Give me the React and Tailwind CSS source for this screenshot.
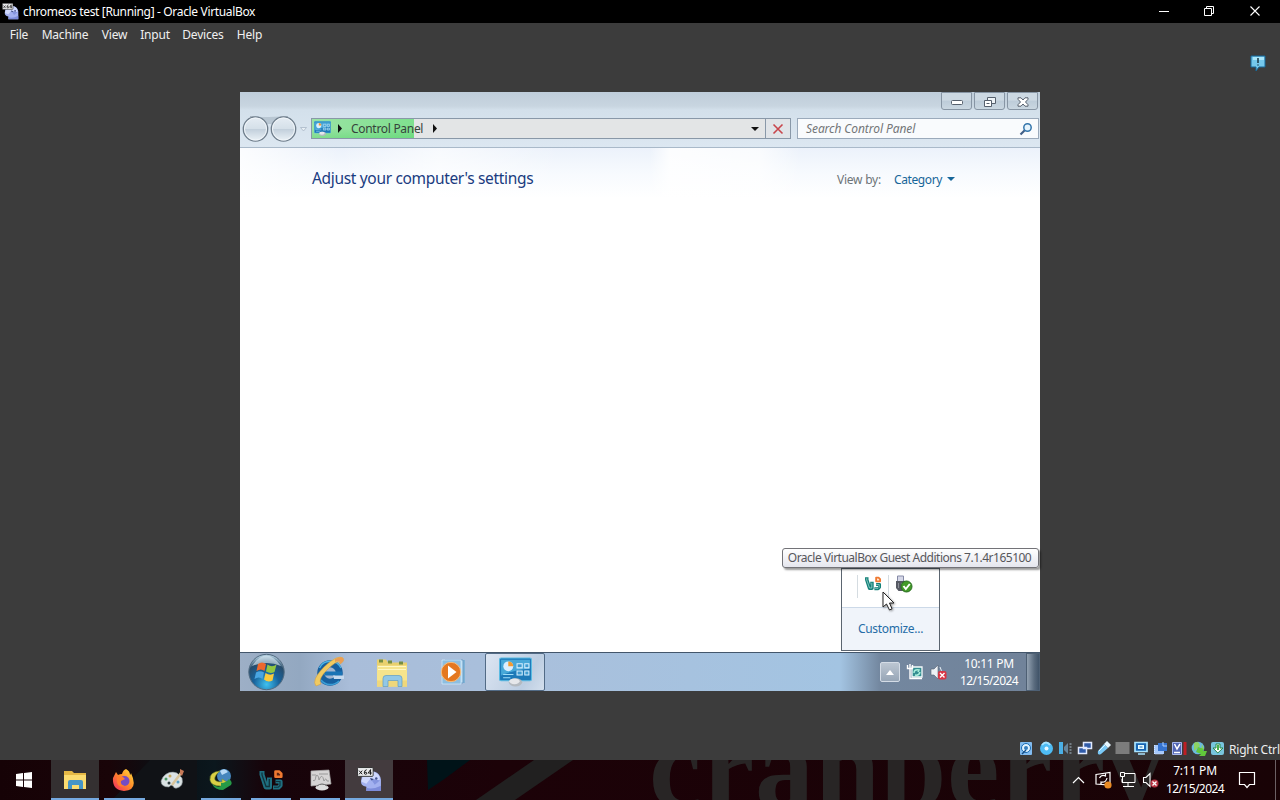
import React from "react";

const MENU = [
  ["File", "w-[32px]"],
  ["Machine", "w-[60px]"],
  ["View", "w-[39px]"],
  ["Input", "w-[42px]"],
  ["Devices", "w-[54px]"],
  ["Help", "w-[39px]"],
];

function Svg({ w, h, box, className = "", children }) {
  return (
    <svg width={w} height={h} viewBox={box || `0 0 ${w} ${h}`} className={`block shrink-0 ${className}`} fill="none">
      {children}
    </svg>
  );
}

function VmIcon({ size }) {
  return (
    <Svg w={size} h={size} box="0 0 24 24">
      <path d="M5 7Q9 2 17 4.5Q22 6 23 12V23H9V19Q3 18 4 13Z" fill="#a3b1f0" />
      <path d="M6 8Q11 3 17 5Q22 7 22 12L18 14L13 11L9 16L4 14Z" fill="#cfd8fd" />
      <path d="M13 11L22 13L17 17Z" fill="#8595df" />
      <path d="M12.5 10.5L16 11.5L14 13Z" fill="#33406f" />
      <circle cx="18.5" cy="11" r="1.2" fill="#45548f" />
      <path d="M9 20Q15 22 23 18V23H9Z" fill="#7d8cda" />
      <rect x=".5" y=".5" width="15" height="8.5" rx="1" fill="#e8e8ea" stroke="#222" strokeWidth=".8" />
      <path d="M2 3.5l3 3.5M5 3.5l-3 3.5M9.3 2.6Q7 3 7 5.6 7 7 8.2 7 9.6 7 9.5 5.7 9.2 4.6 7.2 5.2M13 7.5v-5L10.8 5.8h3.4" stroke="#111" strokeWidth=".9" />
    </Svg>
  );
}

function VBoxLogo({ w, h, teal = "#1f6f80", fill = "#12333c", hole = "#5c2310" }) {
  return (
    <Svg w={w} h={h} box="0 0 26 23">
      <path d="M4 2.5V6L8 18.5H11.5V9" stroke={teal} strokeWidth="5" strokeLinejoin="round" />
      <path d="M4 4V6.5L8 18H11.3V10.5" stroke={fill} strokeWidth="1.3" />
      <path d="M17.5 3H21L23.3 5.2V8.3H17.5Z" fill={hole} stroke="#ef7931" strokeWidth="2.6" strokeLinejoin="round" />
      <path d="M17.5 13H22.5V17L20.5 19H15" stroke={teal} strokeWidth="4.2" strokeLinejoin="round" />
      <path d="M17.5 13H22V17L20.2 18.8H16" stroke={fill} strokeWidth="1.1" />
    </Svg>
  );
}

function ControlPanelIcon({ w, h }) {
  return (
    <Svg w={w} h={h} box="0 0 32 29">
      <rect x=".5" y="1" width="31" height="22" rx="1.5" fill="#1d79b8" stroke="#5bbbe2" />
      <path d="M2 2.5H30V11Q15 12 2 18Z" fill="#48a8d8" />
      <circle cx="9" cy="9" r="4.8" fill="#dcefff" />
      <path d="M9 9V4.2A4.8 4.8 0 0 1 13.8 9Z" fill="#f39b31" />
      <path d="M17.5 6.5h5v4h-5zM25 6.5h4v4h-4zM17.5 13.5h5v4h-5zM25 13.5h4v4h-4z" fill="#3f9bd0" stroke="#d8f1ff" />
      <path d="M4 17h10M4 20h7" stroke="#9fdcf7" />
      <ellipse cx="16" cy="24.5" rx="6.5" ry="4" fill="#b4bac0" />
      <ellipse cx="15" cy="23.5" rx="5" ry="2.8" fill="#e5e7ea" />
    </Svg>
  );
}

function GuestFolder() {
  return (
    <Svg w={32} h={31} box="0 0 32 30">
      <path d="M1 2H10L12 5H31V29H1Z" fill="#e9d06e" />
      <path d="M1 8H31V29H1Z" fill="#f6e48c" />
      <path d="M3 2h4v3H3zM12 3h4v3h-4zM23 4h4v3h-4z" fill="#768e42" />
      <path d="M2 9H30M2 12H30" stroke="#fff8c4" />
      <path d="M1 23H31V29H1Z" fill="#ecd274" opacity=".7" />
      <path d="M7 29V21Q7 18 10 18H23Q26 18 26 21V29H22V23H12V29Z" fill="#92c8e6" stroke="#5e9cc6" strokeWidth=".7" />
    </Svg>
  );
}

function TitleBar() {
  return (
    <header className="flex h-[23px] shrink-0 items-center bg-black text-white">
      <div className="flex w-[23px] justify-start pl-[2px]"><VmIcon size={17} /></div>
      <span className="flex-1 pt-[1px] text-[12px] tracking-[-0.34px]">chromeos test [Running] - Oracle VirtualBox</span>
      <Svg w={137} h={22}>
        <path d="M16 10.5H26" stroke="#fff" />
        <path d="M61.5 7.5h7v7h-7zM63.5 7V5.5h7v7H69" stroke="#fff" />
        <path d="M107.5 5.5l9 9M116.5 5.5l-9 9" stroke="#fff" strokeWidth="1.1" />
      </Svg>
    </header>
  );
}

const WINDOW_BUTTON = "flex h-[18px] w-[31px] items-center justify-center rounded-b-[3px] border border-[#8795a4] bg-[linear-gradient(#ccd8e2_45%,#bdccd9_50%,#cad7e1)] pt-[1px]";

function WindowButtons() {
  return (
    <div className="flex h-[18px] shrink-0 justify-end gap-[2px] pr-[2px]">
      <div className={WINDOW_BUTTON}>
        <Svg w={12} h={8}><rect x=".5" y="2.5" width="11" height="4" rx="1" fill="#fff" stroke="#56606d" /></Svg>
      </div>
      <div className={WINDOW_BUTTON}>
        <Svg w={13} h={12}>
          <path d="M4.5 1.5h8v6h-8z" fill="#eef3f7" stroke="#56606d" />
          <path d="M1.5 4.5h7v6h-7z" fill="#fff" stroke="#56606d" /><path d="M3.5 7.5h3" stroke="#56606d" />
        </Svg>
      </div>
      <div className={WINDOW_BUTTON}>
        <Svg w={12} h={10}>
          <path d="M1 .8h3L6 3 8 .8h3v1.5L8.5 5 11 7.7v1.5H8L6 7 4 9.2H1V7.7L3.5 5 1 2.3Z" fill="#fff" stroke="#56606d" />
        </Svg>
      </div>
    </div>
  );
}

function ExplorerBar() {
  return (
    <div className="flex h-[56px] shrink-0 flex-col border-b border-[#a9b9c9] bg-[linear-gradient(#bfcdda_0px,#c8d5e0_14px,#d3e0eb_18px,#dce7f1_55px)]">
      <WindowButtons />
      <div className="flex h-[38px] items-center">
        <Svg w={71} h={30}>
          <defs>
            <linearGradient id="orb" x1="0" y1="0" x2="0" y2="1">
              <stop stopColor="#e6edf4" /><stop offset=".48" stopColor="#d5e0e9" /><stop offset=".52" stopColor="#c3d0dc" /><stop offset="1" stopColor="#ecf3f8" />
            </linearGradient>
          </defs>
          <path d="M10 2.7Q29 5 48 2.7" stroke="#a6b2be" strokeWidth="1.5" />
          <path d="M15 3H43L32 10H27Z" fill="#b9c7d3" />
          <circle cx="15.5" cy="15" r="12.2" fill="url(#orb)" stroke="#6e7d8b" strokeWidth="1.3" />
          <circle cx="43.5" cy="15" r="12.2" fill="url(#orb)" stroke="#6e7d8b" strokeWidth="1.3" />
          <circle cx="15.5" cy="15" r="11" stroke="#f0f5f9" /><circle cx="43.5" cy="15" r="11" stroke="#f0f5f9" />
          <path d="M60.5 13.5h6l-3 3.5z" fill="#e9f0f6" stroke="#a9b8c6" strokeWidth=".8" />
        </Svg>
        <div className="flex h-[21px] w-[455px] items-center border border-[#8998a8] bg-[#e3e5e6] bg-[linear-gradient(transparent_50%,rgba(60,205,85,0.28)_100%),linear-gradient(90deg,#9be3a4_0,#7fe08f_102px)] bg-[size:102px_100%] bg-no-repeat">
          <div className="pl-[2px]"><ControlPanelIcon w={17} h={17} /></div>
          <Svg w={20} h={11}><path d="M7 1l4 4.5L7 10z" fill="#111" /></Svg>
          <span className="w-[72px] pt-[1px] text-[12px] tracking-[-0.3px] whitespace-nowrap text-[#36443b]">Control Panel</span>
          <Svg w={20} h={11}><path d="M10 1l4 4.5L10 10z" fill="#111" /></Svg>
          <Svg w={9} h={6} className="mr-[5px] ml-auto"><path d="M0 1h8L4 5z" fill="#111" /></Svg>
        </div>
        <div className="flex h-[21px] w-[25px] items-center justify-center border border-l-0 border-[#8998a8] bg-[#e0e4e8] pt-[1px]">
          <Svg w={12} h={12}><path d="M1.5 1.5l9 9M10.5 1.5l-9 9" stroke="#c8464c" strokeWidth="1.6" /></Svg>
        </div>
        <div className="ml-[6px] flex h-[21px] w-[242px] items-center border border-[#9baabb] bg-[#f9fbfd] pl-[8px]">
          <span className="pt-[1px] text-[12px] tracking-[-0.08px] text-[#737678] italic">Search Control Panel</span>
          <Svg w={14} h={14} className="mr-[5px] ml-auto">
            <path d="M1.5 12.5L6 8" stroke="#405f87" strokeWidth="2.2" />
            <circle cx="8.5" cy="5.5" r="3.7" fill="#e6f4fd" stroke="#3475ab" strokeWidth="1.5" />
          </Svg>
        </div>
      </div>
    </div>
  );
}

function GuestTaskbar() {
  return (
    <div className="flex h-[39px] shrink-0 border-t border-[#43566b] bg-[linear-gradient(90deg,#9dafc6_0,#93a8c1_60px,#a9bdd9_110px,#a9c0dc_300px,#a3c4e2_600px,#73879f_640px,#71839a_785px)]">
      <div className="flex w-[58px] justify-center pr-[4px]">
        <Svg w={40} h={38}>
          <defs>
            <radialGradient id="start" cx=".5" cy=".85" r=".8">
              <stop stopColor="#3fc1ef" /><stop offset=".45" stopColor="#18639c" /><stop offset=".8" stopColor="#284c6b" /><stop offset="1" stopColor="#a5c2d4" />
            </radialGradient>
          </defs>
          <circle cx="19.5" cy="19" r="17.7" fill="url(#start)" stroke="#526b81" />
          <path d="M5 13Q19 -8 34 13Q20 7 5 13" fill="#d9e9f2" opacity=".65" />
          <path d="M11 11Q15 8 19 11L17.5 18Q14 15 9.5 18Z" fill="#ec682d" />
          <path d="M20.5 11.5Q25 15 29.5 11.5L27.5 19Q23.5 21 19 18.5Z" fill="#92c742" />
          <path d="M9 19.5Q13 17 17 19.5L15.5 26Q12 23 7.5 26Z" fill="#49a5e2" />
          <path d="M18.5 20Q23 23 27 20.5L25.5 27.5Q21 30 17 26.5Z" fill="#fbcb3b" />
        </Svg>
      </div>
      <div className="flex w-[62px] items-center justify-center">
        <Svg w={32} h={32}>
          <circle cx="17" cy="17" r="9.3" stroke="#17609f" strokeWidth="7" />
          <path d="M6.5 12A12 12 0 0 1 28 12" stroke="#4cb4e4" strokeWidth="1.5" />
          <path d="M8 24A12 12 0 0 0 26 25" stroke="#3a9ed6" strokeWidth="1.5" />
          <path d="M10 15.5H29V19.5H12Z" fill="#1973b5" /><path d="M20 19.5h11v3.5H21z" fill="#c5d9ee" />
          <path d="M3 30Q-2 24 11 11Q25 -2 30 2Q32 5 27 8Q28 2 17 11Q4 23 8 28Z" fill="#f0ca62" stroke="#d29a3b" strokeWidth=".5" />
          <path d="M22 3Q28 0 30 2Q32 5 27 8Q28 3 22 6Z" fill="#eb9d52" />
        </Svg>
      </div>
      <div className="flex w-[62px] items-center justify-center pl-[2px]"><GuestFolder /></div>
      <div className="flex w-[62px] items-center justify-center">
        <Svg w={28} h={28}>
          <path d="M8 2h18v23H8z" fill="#7fb3d6" /><path d="M6 2h18v23H6z" fill="#b7d9ee" stroke="#5b91bd" strokeWidth=".7" />
          <path d="M3 2h19v24H3z" fill="#8dbee0" stroke="#d8efff" strokeWidth=".7" />
          <circle cx="12" cy="14" r="9.7" fill="#e47820" stroke="#f7bd7b" />
          <path d="M9 7.5l8.5 6.5L9 20.5z" fill="#fff" />
        </Svg>
      </div>
      <div className="ml-[1px] flex w-[60px] items-center justify-center rounded-[2px] border border-[#526b86] bg-[linear-gradient(120deg,#dce5f2,#bccde1_70%,#d3dfed)]">
        <ControlPanelIcon w={33} h={30} />
      </div>
      <div className="ml-auto flex items-center">
        <div className="mr-[6px] flex h-[20px] w-[20px] items-center justify-center rounded-[2px] border border-[#d4dce6] bg-[linear-gradient(#bcc6d2,#97a6b7)]">
          <Svg w={8} h={5}><path d="M0 5L4 0l4 5z" fill="#fff" /></Svg>
        </div>
        <Svg w={18} h={18}>
          <path d="M6 4h10v10H6z" fill="#348d91" stroke="#f4fbfc" strokeWidth="1.3" />
          <path d="M1.5 2v3.5h5V2M4 1v14.5h12" stroke="#fff" strokeWidth="1.4" />
          <path d="M8 10Q8 6 13 7l-1 2M14 9q-1 4-5 3" stroke="#a9efdc" strokeWidth="1.5" />
        </Svg>
        <Svg w={18} h={18} className="ml-[6px]">
          <path d="M1 6h3l4-4v14l-4-4H1z" fill="#edf1f5" stroke="#546273" strokeWidth=".6" />
          <path d="M10 4q3 4 0 7" stroke="#e8eef4" />
          <rect x="8" y="8" width="8.5" height="8.5" rx="2" fill="#d73645" /><path d="M10 10l4.5 4.5M14.5 10L10 14.5" stroke="#fff" strokeWidth="1.4" />
        </Svg>
        <div className="ml-[7px] w-[68px] pb-[1px] text-center text-[12px] leading-[17px] tracking-[-0.3px] text-white">
          <div>10:11 PM</div><div className="tracking-[-0.6px]">12/15/2024</div>
        </div>
        <div className="ml-[3px] h-[38px] w-[14px] border border-[#4e6074] bg-[linear-gradient(90deg,#93a2b2,#5a6b7e_60%,#405368)]" />
      </div>
    </div>
  );
}

function TrayPopup() {
  return (
    <div className="absolute top-[476px] left-[601px] flex h-[83px] w-[99px] flex-col border border-[#5b6570] bg-white">
      <div className="flex h-[38px] items-start pt-[6px]">
        <div className="ml-[15px] flex h-[23px] w-[32px] justify-center border-r border-l border-[#d5dce1]">
          <VBoxLogo w={18} h={17} teal="#138078" fill="#8fccc6" hole="#ffe8d4" />
        </div>
        <Svg w={20} h={20} className="ml-[5px]">
          <path d="M3.5 1h6v6h-6z" fill="#d6d8e8" stroke="#858aa6" /><path d="M2 6h9v7l-2.5 3h-4L2 13z" fill="#565963" />
          <path d="M4.5 8v5M7.5 8v5" stroke="#8c9098" />
          <circle cx="12.5" cy="11.5" r="5.5" fill="#439a28" stroke="#276c20" /><path d="M9.5 11l2.3 3 4-5" stroke="#fff" strokeWidth="2" />
        </Svg>
      </div>
      <div className="flex flex-1 items-center justify-center border-t border-[#ccd9e8] bg-[#f0f4fa] pb-[1px] text-[12px] tracking-[-0.3px] text-[#256ca6]">Customize...</div>
    </div>
  );
}

function GuestScreen() {
  return (
    <main className="relative mx-auto mt-[47px] flex h-[599px] w-[800px] flex-col bg-white">
      <ExplorerBar />
      <section className="flex-1 bg-[linear-gradient(90deg,rgba(255,255,255,0.8)_0,transparent_100px,rgba(255,255,255,0.6)_200px,transparent_320px,transparent_410px,rgba(255,255,255,0.85)_430px,rgba(255,255,255,0.7)_520px,transparent_560px),linear-gradient(#ecf2fb_0px,#f7fafe_25px,#ffffff_50px)]">
        <div className="flex h-[62px] items-center pl-[72px]">
          <h1 className="w-[525px] pb-[1px] text-[15.5px] tracking-[-0.33px] text-[#193b80]">Adjust your computer's settings</h1>
          <span className="w-[57px] pt-[2px] text-[12px] tracking-[-0.25px] text-[#6d7478]">View by:</span>
          <span className="w-[53px] pt-[2px] text-[12px] tracking-[-0.4px] text-[#176699]">Category</span>
          <Svg w={9} h={6}><path d="M0 1h8L4 5z" fill="#176699" /></Svg>
        </div>
      </section>
      <GuestTaskbar />
      <TrayPopup />
      <div className="absolute top-[456px] left-[542px] flex h-[20px] w-[257px] items-center justify-center rounded-[3px] border border-[#737378] bg-[linear-gradient(#ffffff,#e5e6ee)] pr-[2px] text-[12px] tracking-[-0.5px] whitespace-nowrap text-[#57575b] shadow-[2px_2px_2px_rgba(0,0,0,0.4)]">
        Oracle VirtualBox Guest Additions 7.1.4r165100
      </div>
      <div className="absolute top-[499px] left-[642px]">
        <Svg w={14} h={22} className="drop-shadow-[1px_1px_1px_rgba(0,0,0,0.4)]"><path d="M1 1v15l3.5-3L7.5 19l2.5-1.2L7.5 12H12z" fill="#fff" stroke="#222" /></Svg>
      </div>
    </main>
  );
}

function StatusBar() {
  return (
    <div className="flex h-[23px] shrink-0 items-center justify-end pt-[1px]">
      <Svg w={208} h={18}>
        <rect x="0" y="2" width="12" height="13" rx="1" fill="#82bcf0" />
        <circle cx="6" cy="8" r="4.5" fill="#e1f3ff" stroke="#176bb3" /><circle cx="6" cy="8" r="2" fill="#347fbf" /><path d="M2 14l4-4" stroke="#144e87" strokeWidth="1.5" />
        <circle cx="26.5" cy="8.5" r="6.5" fill="#4ebcf4" /><path d="M22 5q4-5 8 0" stroke="#a7e4ff" strokeWidth="2" /><circle cx="26.5" cy="8.5" r="2" fill="#e8f8ff" />
        <path d="M39 2h4v12h-4z" fill="#4aafe5" /><path d="M44 7l4-4v11l-4-4z" fill="#66849a" /><path d="M50.5 3v11" stroke="#737d84" strokeWidth="2" strokeDasharray="2 1" />
        <path d="M63.5 2.5h8v6h-8zM58.5 7.5h8v6h-8z" fill="#315ca9" stroke="#e1eafe" strokeWidth="1.5" />
        <path d="M78 11l6-7 4 4-7 6q-4 2-3-3z" fill="#7ac9f7" /><path d="M84 4l3-3 4 4-3 3z" fill="#e5f6ff" /><path d="M79 11l6-6" stroke="#dff8ff" />
        <rect x="95.5" y="2" width="14" height="12" fill="#7c7c7c" />
        <path d="M115 2.5h12v9h-12zM118 14h7" fill="#1766b3" stroke="#a9e4ff" strokeWidth="1.7" /><rect x="118" y="5" width="6" height="4" fill="#e4fbff" /><path d="M119.5 6.5h3v1h-3z" fill="#1766b3" />
        <path d="M134 5h4v6h6v3h-10z" fill="#a6c8fa" /><path d="M138 3h9v8h-9z" fill="#3573cf" /><path d="M143 2v4h4" stroke="#abcfff" /><path d="M134.5 5v9h9" stroke="#d5e7ff" strokeDasharray="1 1" />
        <path d="M152.5 2.5h9v12h-9z" fill="#5265b4" stroke="#a7b7ec" /><path d="M154.5 4l2.5 5 3-5M154 12.5h6" stroke="#fff" strokeWidth="1.5" />
        <path d="M165 2v13" stroke="#be1e24" strokeWidth="3" />
        <circle cx="178" cy="8" r="6.3" fill="#6ab9df" /><path d="M174 3q5-3 6 3l-6 5zM182 4l2 5-3 2z" fill="#8cd264" /><path d="M178 7l6 2-1 2 4 0-2 5-6 0 2-2-5-2z" fill="#62c83b" />
        <rect x="191" y="2" width="13" height="13" rx="2" fill="#78c5de" /><path d="M196 4h4v4h3l-5.2 5L193 8h3z" fill="#fff" stroke="#298a4c" /><path d="M198 5v5" stroke="#4ab24c" strokeWidth="2" />
      </Svg>
      <span className="w-[52px] pt-[1px] pl-[1px] text-[12px] tracking-[-0.2px] whitespace-nowrap text-[#eee]">Right Ctrl</span>
    </div>
  );
}

function TaskItem({ className, line, children }) {
  return (
    <div className={`flex flex-col items-center justify-end ${className}`}>
      <div className="flex flex-1 items-center justify-center pt-[1px]">{children}</div>
      <div className={`h-[2px] ${line}`} />
    </div>
  );
}

function HostTaskbar() {
  return (
    <footer className="relative flex h-[40px] shrink-0 overflow-hidden bg-[linear-gradient(90deg,#160206_0,#190408_110px,#0a1015_165px,#0b171d_215px,#17040a_265px,#1c0208_500px,#190306_1280px)]">
      <svg className="absolute top-0 left-0" width="1280" height="40" aria-hidden="true">
        <path d="M427 0H470L443 20L428 30Z" fill="#001318" />
        <path d="M534 0H573L515 40H476Z" fill="#212020" />
        <path d="M150 0H197V40H112Z" fill="#101216" />
      </svg>
      <div className="absolute top-[-51px] left-[649px] font-['Liberation_Serif',serif] text-[118px] leading-[118px] font-bold tracking-[0.6px] text-[#282525]">cranberry</div>
      <nav className="relative flex">
        <TaskItem className="w-[51px]" line="w-0">
          <Svg w={18} h={18} className="mr-[3px]"><path d="M1 3l7-1v6.5H1zM9 2l8-1v7.5H9zM1 9.5h7V16l-7-1zM9 9.5h8V17l-8-1z" fill="#fff" /></Svg>
        </TaskItem>
        <TaskItem className="w-[48px] bg-[#343031]" line="w-[48px] bg-[#75a9df]">
          <Svg w={24} h={20}>
            <path d="M1 1h8l2 2h12v16H1z" fill="#e5b845" /><path d="M1 5h22v14H1z" fill="#fbdc70" />
            <path d="M5 19v-7q0-2 2-2h11q2 0 2 2v7h-4v-4H9v4z" fill="#4695c6" />
          </Svg>
        </TaskItem>
        <TaskItem className="w-[50px]" line="w-[41px] bg-[#75a9df]">
          <Svg w={24} h={24}>
            <defs><linearGradient id="fox" x1="1" y1="0" x2="0" y2="1"><stop stopColor="#ffe43e" /><stop offset=".5" stopColor="#ff8529" /><stop offset="1" stopColor="#ef2469" /></linearGradient></defs>
            <path d="M14 1q4 2 4 6 1-1 1-2 8 17-7 18Q0 22 1 10L4 4l2 3q2-1 4-1 1-4 4-5z" fill="url(#fox)" />
            <circle cx="12.5" cy="13" r="5" fill="#754cc4" /><path d="M5 8l6 1 2 2-4 2q-1 4 4 5-7 2-8-4z" fill="#ff7b2f" />
          </Svg>
        </TaskItem>
        <TaskItem className="w-[47px]" line="w-0">
          <Svg w={26} h={24}>
            <path d="M3 9Q9 2 17 5l5 5q2 8-5 10-3 1-4-2-2-2-4 1Q1 19 1 13z" fill="#dbe2e4" stroke="#879194" strokeWidth=".6" />
            <path d="M12 17l9-12" stroke="#d8c49a" strokeWidth="2.5" /><path d="M20 6V1l4 2-2 5z" fill="#c77a58" />
            <circle cx="6" cy="11" r="1.5" fill="#4e9b67" /><circle cx="10" cy="8" r="1.5" fill="#c9a95f" /><circle cx="9" cy="15" r="1.5" fill="#2c3a3c" /><circle cx="18" cy="14" r="1.5" fill="#579cc3" />
          </Svg>
        </TaskItem>
        <TaskItem className="w-[50px]" line="w-[40px] bg-[#75a9df]">
          <Svg w={25} h={24}>
            <circle cx="15" cy="8" r="7" fill="#4686bd" /><path d="M11 3q5-4 8 1l-6 3z" fill="#b7d9f6" />
            <path d="M11 3Q0 4 1 12q1 6 11 6v3l9-5-8-5v3q-9 0-7-5 1-3 5-6z" fill="#d9cf45" stroke="#798d2b" strokeWidth=".6" />
            <path d="M3 16q5 4 9 2v-3q5 0 8-4 4 3 2 6l-8 5q-8 0-11-6z" fill="#269947" />
          </Svg>
        </TaskItem>
        <TaskItem className="w-[50px]" line="w-[40px] bg-[#75a9df]"><VBoxLogo w={26} h={24} /></TaskItem>
        <TaskItem className="w-[47px]" line="w-[40px] bg-[#75a9df]">
          <Svg w={24} h={24}>
            <path d="M3 3l18-1 2 14-20 2z" fill="#d6d4d4" stroke="#aaa" strokeWidth=".7" /><path d="M5 12q2 3 3-4 2-3 3 4 3-8 5 1 2-4 3 0h2M4 7h4m3-1h9" stroke="#929292" strokeWidth=".9" />
            <ellipse cx="14" cy="19.5" rx="6.5" ry="3" fill="#ddd" /><path d="M9 18q5-4 10 0" stroke="#666" />
          </Svg>
        </TaskItem>
        <TaskItem className="ml-[2px] w-[48px] bg-[#433b3e]" line="w-[48px] bg-[#75a9df]"><VmIcon size={25} /></TaskItem>
      </nav>
      <div className="relative ml-auto flex items-center text-white">
        <Svg w={92} h={24}>
          <path d="M1 15l5.5-5.5L12 15" stroke="#fff" strokeWidth="1.2" />
          <path d="M24 6.5l14-2v12.5l-14-1zM27.5 10q2-4 6-2V5.5M35 10q-1 5-6 4v3" stroke="#fff" strokeWidth="1.2" />
          <circle cx="36" cy="17" r="3.6" fill="#e98b24" />
          <path d="M52 5.5h11v9H50V11M56 15v3M51 18.5h11M48.5 4.5h4v4h-4zM50.5 9v5" stroke="#fff" />
          <path d="M71.5 9.5H74l4-4v13l-4-4h-2.5z" stroke="#fff" strokeWidth="1.1" />
          <circle cx="82.5" cy="15.5" r="4" fill="#b53341" /><path d="M80.5 13.5l4 4M84.5 13.5l-4 4" stroke="#fff" strokeWidth="1.3" />
        </Svg>
        <div className="w-[62px] text-center text-[12px] leading-[18px] tracking-[-0.2px]"><div>7:11 PM</div><div className="tracking-[-0.6px]">12/15/2024</div></div>
        <Svg w={52} h={40} className="ml-[2px]">
          <path d="M11.5 12.5h15v12h-5l-2.5 3-2.5-3h-5z" stroke="#fff" strokeWidth="1.2" />
          <path d="M47.5 0v40" stroke="#6c6064" />
        </Svg>
      </div>
    </footer>
  );
}

export default function App() {
  return (
    <div className="flex h-[800px] w-[1280px] flex-col overflow-hidden bg-[#3c3c3c] font-['Noto_Sans',sans-serif]">
      <TitleBar />
      <nav className="flex h-[22px] shrink-0 items-center pt-[1px] pl-[3px] text-[12px] tracking-[-0.2px] text-[#f0f0f0]">
        {MENU.map(([label, width]) => <span key={label} className={`text-center ${width}`}>{label}</span>)}
      </nav>
      <div className="flex flex-1 items-start">
        <div className="w-[240px]" />
        <GuestScreen />
        <div className="w-[240px] pt-[10px] pl-[10px]">
          <Svg w={17} h={18} className="ml-auto mr-[13px]"><path d="M1 1h14v11H9l-3 4v-4H1z" fill="#75c8ec" stroke="#176798" /><path d="M3 2h11v3H3z" fill="#aae7fb" /><path d="M8 3v5M8 9.5v1" stroke="#173342" strokeWidth="1.5" /></Svg>
        </div>
      </div>
      <StatusBar />
      <HostTaskbar />
    </div>
  );
}
